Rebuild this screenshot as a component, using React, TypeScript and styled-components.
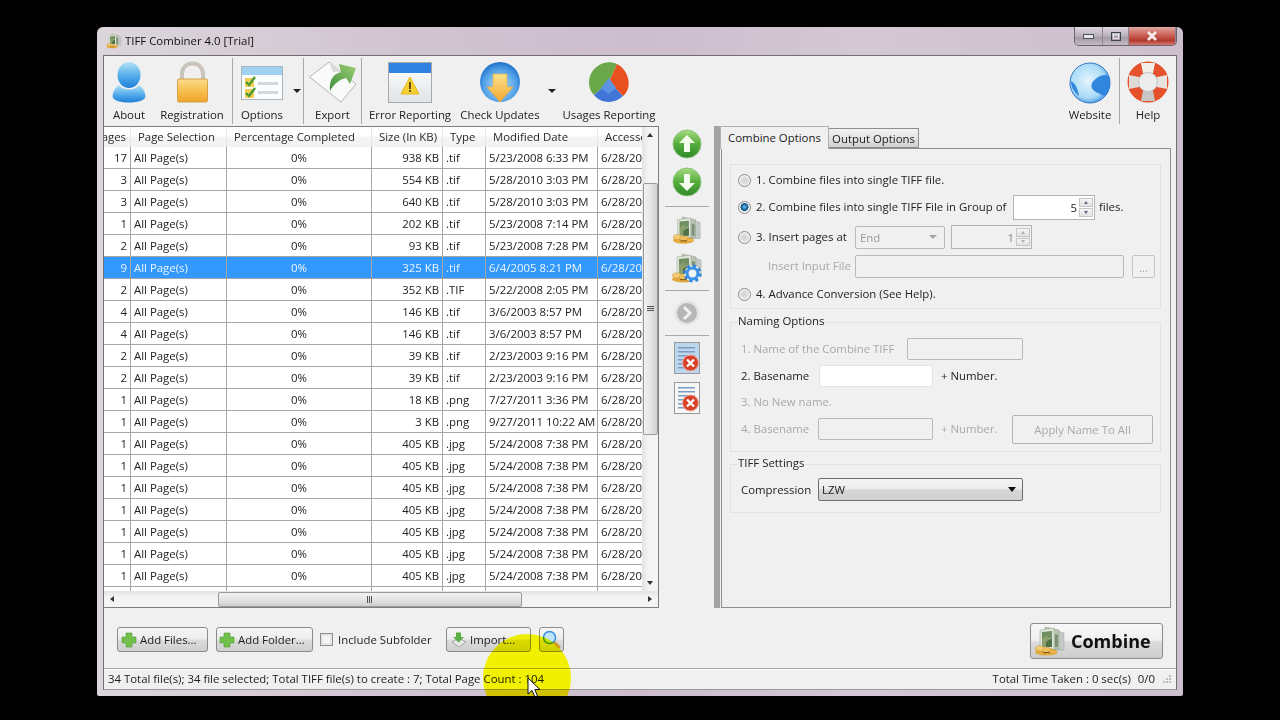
import React from "react";
import styled, { createGlobalStyle } from "styled-components";

// =============================================================================
// DATA
// =============================================================================
const COLUMNS = "27px 96px 145px 71px 43px 112px 70px";

const HEADERS = [
    { label: "Pages", align: "right" },
    { label: "Page Selection", align: "left" },
    { label: "Percentage Completed", align: "left" },
    { label: "Size (In KB)", align: "left" },
    { label: "Type", align: "left" },
    { label: "Modified Date", align: "left" },
    { label: "Accessed", align: "left" },
];

const FILES: [string, string, string, string][] = [
    ["17", "938 KB", ".tif", "5/23/2008 6:33 PM"],
    ["3", "554 KB", ".tif", "5/28/2010 3:03 PM"],
    ["3", "640 KB", ".tif", "5/28/2010 3:03 PM"],
    ["1", "202 KB", ".tif", "5/23/2008 7:14 PM"],
    ["2", "93 KB", ".tif", "5/23/2008 7:28 PM"],
    ["9", "325 KB", ".tif", "6/4/2005 8:21 PM"],
    ["2", "352 KB", ".TIF", "5/22/2008 2:05 PM"],
    ["4", "146 KB", ".tif", "3/6/2003 8:57 PM"],
    ["4", "146 KB", ".tif", "3/6/2003 8:57 PM"],
    ["2", "39 KB", ".tif", "2/23/2003 9:16 PM"],
    ["2", "39 KB", ".tif", "2/23/2003 9:16 PM"],
    ["1", "18 KB", ".png", "7/27/2011 3:36 PM"],
    ["1", "3 KB", ".png", "9/27/2011 10:22 AM"],
    ["1", "405 KB", ".jpg", "5/24/2008 7:38 PM"],
    ["1", "405 KB", ".jpg", "5/24/2008 7:38 PM"],
    ["1", "405 KB", ".jpg", "5/24/2008 7:38 PM"],
    ["1", "405 KB", ".jpg", "5/24/2008 7:38 PM"],
    ["1", "405 KB", ".jpg", "5/24/2008 7:38 PM"],
    ["1", "405 KB", ".jpg", "5/24/2008 7:38 PM"],
    ["1", "405 KB", ".jpg", "5/24/2008 7:38 PM"],
];

const SELECTED_ROW = 5;

// =============================================================================
// STYLING
// =============================================================================
const GlobalStyle = createGlobalStyle`
    html, body {
        margin: 0;
        height: 720px;
        overflow: hidden;
        background: #000;
    }
    body {
        font-family: "Open Sans", "Liberation Sans", sans-serif;
        font-size: 11.4px;
        color: #1c1c1c;
    }
    * { box-sizing: border-box; }
`;

const Window = styled.div`
    position: relative;
    overflow: hidden;
    margin: 27px 0 0 97px;
    width: 1086px;
    height: 669px;
    padding: 0 6px 6px;
    display: flex;
    flex-direction: column;
    border-radius: 6px 6px 2px 2px;
    background: linear-gradient(90deg, #dcd6dc 0%, #d2c6d2 25%, #cdbdcd 50%, #d4c8d4 70%, #cdbfce 100%);
`;

const TitleBar = styled.div`
    height: 28px;
    flex: none;
    display: flex;
    align-items: flex-start;
`;

const TitleIcon = styled.div`
    margin: 6px 0 0 3px;
    height: 16px;
`;

const TitleText = styled.span`
    margin: 6px 0 0 3px;
    line-height: 16px;
    color: #111;
`;

const CaptionGroup = styled.div`
    margin-left: auto;
    width: 103px;
    height: 19px;
    display: flex;
    border: 1px solid #6d6470;
    border-top: none;
    border-radius: 0 0 5px 5px;
    overflow: hidden;
`;

const CaptionButton = styled.div<{ $width: number; $close?: boolean }>`
    width: ${(p) => p.$width}px;
    display: flex;
    align-items: center;
    justify-content: center;
    border-right: 1px solid #8f8794;
    background: ${(p) =>
        p.$close
            ? "linear-gradient(180deg, #e0a8a0 0%, #c9584e 50%, #b33a30 75%, #d37a6e 100%)"
            : "linear-gradient(180deg, #ded8df 0%, #b9b0bb 50%, #a39aa6 60%, #c3bac5 100%)"};
`;

const Client = styled.div`
    flex: 1;
    min-height: 0;
    display: flex;
    flex-direction: column;
    border: 1px solid #6f6f6f;
    border-bottom-color: #9a9a9a;
    background: #f0f0f0;
`;

const Toolbar = styled.div`
    height: 70px;
    flex: none;
    display: flex;
    padding-top: 2px;
`;

const ToolItem = styled.div<{ $width: number }>`
    width: ${(p) => p.$width}px;
    flex: none;
    display: flex;
    flex-direction: column;
    align-items: center;
`;

const ToolIcon = styled.div`
    height: 49px;
`;

const ToolLabel = styled.span`
    height: 16px;
    line-height: 16px;
    white-space: nowrap;
    color: #222;
`;

const ToolSeparator = styled.div<{ $left?: number }>`
    width: 1px;
    height: 66px;
    flex: none;
    margin-left: ${(p) => p.$left ?? 0}px;
    background: #a9a9a9;
`;

const Dropdown = styled.div<{ $width: number }>`
    width: ${(p) => p.$width}px;
    flex: none;
    display: flex;
    justify-content: center;
    padding-top: 31px;

    &::after {
        content: "";
        width: 0;
        height: 0;
        border: 4px solid transparent;
        border-top: 4px solid #222;
        border-bottom: none;
    }
`;

const ToolSpacer = styled.div`
    flex: 1;
`;

const Main = styled.div`
    height: 482px;
    flex: none;
    display: flex;
`;

const TablePane = styled.div`
    width: 555px;
    flex: none;
    display: flex;
    flex-direction: column;
    border: 1px solid #7d7d7d;
    border-left: none;
    background: #fff;
`;

const TableArea = styled.div`
    flex: 1;
    min-height: 0;
    display: flex;
`;

const Grid = styled.div`
    flex: 1;
    min-width: 0;
    overflow: hidden;
`;

const HeaderRow = styled.div`
    height: 20px;
    display: grid;
    grid-template-columns: ${COLUMNS};
    background: linear-gradient(180deg, #ffffff 0%, #ffffff 45%, #f3f4f5 50%, #f2f2f3 100%);
`;

const HeaderCell = styled.div<{ $align: string }>`
    display: flex;
    align-items: center;
    overflow: hidden;
    white-space: nowrap;
    padding: ${(p) => (p.$align === "left" ? "0 0 0 7px" : "0 4px 0 0")};
    line-height: 20px;
    color: #2a2a2a;
    border-right: 1px solid #e4e6e8;
    justify-content: ${(p) => (p.$align === "right" ? "flex-end" : "flex-start")};
`;

const Row = styled.div<{ $selected?: boolean }>`
    height: 22px;
    display: grid;
    grid-template-columns: ${COLUMNS};
    border-bottom: 1px solid #a6a6a6;
    background: ${(p) => (p.$selected ? "#3399ff" : "#fff")};
    color: ${(p) => (p.$selected ? "#eaf4ff" : "#222")};
`;

const Cell = styled.div<{ $align?: string }>`
    overflow: hidden;
    white-space: nowrap;
    line-height: 21px;
    padding: 0 3px;
    border-right: 1px solid #a6a6a6;
    text-align: ${(p) => p.$align ?? "left"};
`;

const VScroll = styled.div`
    width: 16px;
    flex: none;
    display: flex;
    flex-direction: column;
    align-items: center;
    background: linear-gradient(90deg, #e3e3e3, #f4f4f4 40%, #f4f4f4);
`;

const HScroll = styled.div`
    height: 16px;
    flex: none;
    display: flex;
    align-items: center;
    background: linear-gradient(180deg, #e3e3e3, #f4f4f4 40%, #f4f4f4);
`;

const ScrollArrow = styled.div<{ $dir: "up" | "down" | "left" | "right" }>`
    width: 16px;
    height: 16px;
    flex: none;
    display: flex;
    align-items: center;
    justify-content: center;

    &::after {
        content: "";
        width: 0;
        height: 0;
        border: 3px solid transparent;
        ${(p) =>
            p.$dir === "up"
                ? "border-bottom: 4px solid #333; border-top: none;"
                : p.$dir === "down"
                ? "border-top: 4px solid #333; border-bottom: none;"
                : p.$dir === "left"
                ? "border-right: 4px solid #333; border-left: none;"
                : "border-left: 4px solid #333; border-right: none;"}
    }
`;

const VThumb = styled.div`
    width: 15px;
    height: 252px;
    margin-top: 40px;
    display: flex;
    align-items: center;
    justify-content: center;
    border: 1px solid #9a9a9a;
    border-radius: 2px;
    background: linear-gradient(90deg, #f2f2f2, #e4e4e4 50%, #cfcfcf);
`;

const HThumb = styled.div`
    width: 304px;
    height: 15px;
    margin-left: 98px;
    display: flex;
    align-items: center;
    justify-content: center;
    border: 1px solid #9a9a9a;
    border-radius: 2px;
    background: linear-gradient(180deg, #f2f2f2, #e4e4e4 50%, #cfcfcf);
`;

const Grip = styled.div<{ $vertical?: boolean }>`
    width: ${(p) => (p.$vertical ? 7 : 6)}px;
    height: ${(p) => (p.$vertical ? 6 : 7)}px;
    background: repeating-linear-gradient(
        ${(p) => (p.$vertical ? "180deg" : "90deg")},
        #555 0 1px,
        transparent 1px 2px
    );
`;

const ScrollFill = styled.div`
    flex: 1;
`;

const ActionStrip = styled.div`
    width: 55px;
    flex: none;
    display: flex;
    flex-direction: column;
    align-items: center;
    padding-top: 3px;
`;

const ActionIcon = styled.div<{ $height: number; $top?: number }>`
    height: ${(p) => p.$height}px;
    margin-top: ${(p) => p.$top ?? 0}px;
    display: flex;
    align-items: center;
    justify-content: center;
`;

const ActionSeparator = styled.div<{ $top: number }>`
    width: 44px;
    height: 1px;
    flex: none;
    margin-top: ${(p) => p.$top}px;
    background: #a8a8a8;
`;

const Splitter = styled.div`
    width: 6px;
    flex: none;
    background: #a3a3a3;
`;

const OptionsPane = styled.div`
    width: 451px;
    flex: none;
    display: flex;
    flex-direction: column;
`;

const Tabs = styled.div`
    height: 22px;
    flex: none;
    display: flex;
    align-items: flex-end;
`;

const Tab = styled.div<{ $active?: boolean; $width: number }>`
    width: ${(p) => p.$width}px;
    height: ${(p) => (p.$active ? 23 : 20)}px;
    margin-bottom: ${(p) => (p.$active ? -1 : 0)}px;
    padding: ${(p) => (p.$active ? "0 0 1px" : "1px 0 0")};
    position: relative;
    z-index: ${(p) => (p.$active ? 1 : 0)};
    display: flex;
    align-items: center;
    justify-content: center;
    white-space: nowrap;
    border: 1px solid ${(p) => (p.$active ? "#b0b0b0" : "#8e8e8e")};
    border-left: ${(p) => (p.$active ? "1px solid #b0b0b0" : "none")};
    border-bottom: ${(p) => (p.$active ? "none" : "1px solid #8e8e8e")};
    background: ${(p) =>
        p.$active ? "#f0f0f0" : "linear-gradient(180deg, #f2f2f2 0%, #e4e4e4 50%, #d0d0d0 100%)"};
`;

const TabBody = styled.div`
    flex: 1;
    min-height: 0;
    display: flex;
    flex-direction: column;
    margin-left: 1px;
    padding: 15px 9px 0 8px;
    border: 1px solid #8e8e8e;
    background: #f0f0f0;
`;

const PlainGroup = styled.div`
    height: 145px;
    flex: none;
    padding: 4px 0 0 7px;
    border: 1px solid #e2e2e2;
`;

const LegendGroup = styled.fieldset<{ $height: number; $top: number; $pad: number }>`
    height: ${(p) => p.$height}px;
    flex: none;
    margin: ${(p) => p.$top}px 0 0;
    padding: ${(p) => p.$pad}px 0 0 10px;
    min-width: 0;
    border: 1px solid #e2e2e2;
    border-radius: 0;

    legend {
        padding: 0 0 2px;
        margin-left: -3px;
        line-height: 14px;
        color: #222;
    }
`;

const FormRow = styled.div<{ $gap?: number; $height?: number }>`
    height: ${(p) => p.$height ?? 22}px;
    margin-top: ${(p) => p.$gap ?? 0}px;
    display: flex;
    align-items: center;
    white-space: nowrap;
`;

const FormText = styled.span<{ $width?: number; $muted?: boolean; $left?: number; $level?: boolean }>`
    width: ${(p) => (p.$width ? `${p.$width}px` : "auto")};
    flex: none;
    margin-left: ${(p) => p.$left ?? 0}px;
    padding-bottom: ${(p) => (p.$level ? 0 : 2)}px;
    color: ${(p) => (p.$muted ? "#a9a9a9" : "#222")};
`;

const Radio = styled.span<{ $checked?: boolean }>`
    width: 13px;
    height: 13px;
    flex: none;
    margin-right: 5px;
    border-radius: 50%;
    border: 1px solid #8b8b8b;
    box-shadow: inset 0 0 0 1px #f4f4f4;
    background: ${(p) =>
        p.$checked
            ? "radial-gradient(circle at 50% 45%, #7cc0ea 0, #1b6ea8 32%, #0f4c7e 46%, #e4e4e4 52%, #f2f2f2 100%)"
            : "radial-gradient(circle, #d0d0d0 0, #e0e0e0 45%, #f4f4f4 100%)"};
`;

const TextBox = styled.div<{ $width: number; $height?: number; $disabled?: boolean; $left?: number }>`
    width: ${(p) => p.$width}px;
    height: ${(p) => p.$height ?? 22}px;
    flex: none;
    margin-left: ${(p) => p.$left ?? 0}px;
    border: 1px solid ${(p) => (p.$disabled ? "#b9b9b9" : "#e4e4e4")};
    border-radius: 2px;
    background: ${(p) => (p.$disabled ? "#f0f0f0" : "#fff")};
`;

const SpinBox = styled.div<{ $width: number; $height: number; $disabled?: boolean; $left?: number }>`
    width: ${(p) => p.$width}px;
    height: ${(p) => p.$height}px;
    flex: none;
    margin-left: ${(p) => p.$left ?? 0}px;
    display: flex;
    align-items: center;
    justify-content: flex-end;
    padding-right: 1px;
    border: 1px solid #b4b4b4;
    background: ${(p) => (p.$disabled ? "#f0f0f0" : "#fff")};
    color: ${(p) => (p.$disabled ? "#8a8a8a" : "#222")};
`;

const SpinArrows = styled.div`
    width: 14px;
    height: 100%;
    margin-left: 2px;
    padding: 2px 0;
    display: flex;
    flex-direction: column;
    gap: 1px;
`;

const SpinPart = styled.div<{ $down?: boolean; $disabled?: boolean }>`
    flex: 1;
    display: flex;
    align-items: center;
    justify-content: center;
    border: 1px solid #c6c6c6;
    background: linear-gradient(180deg, #f6f6f6, #e2e2e2);

    &::after {
        content: "";
        width: 0;
        height: 0;
        border: 2.5px solid transparent;
        ${(p) =>
            p.$down
                ? `border-top: 3px solid ${p.$disabled ? "#b0b0b0" : "#5a6a80"}; border-bottom: none;`
                : `border-bottom: 3px solid ${p.$disabled ? "#b0b0b0" : "#5a6a80"}; border-top: none;`}
    }
`;

const DisabledSelect = styled.div`
    width: 90px;
    height: 23px;
    flex: none;
    margin-left: 10px;
    display: flex;
    align-items: center;
    padding: 0 4px;
    border: 1px solid #b9b9b9;
    border-radius: 2px;
    color: #9a9a9a;

    &::after {
        content: "";
        margin-left: auto;
        margin-right: 3px;
        width: 0;
        height: 0;
        border: 4px solid transparent;
        border-top: 4px solid #a5a5a5;
        border-bottom: none;
    }
`;

const EllipsisButton = styled.div`
    width: 23px;
    height: 23px;
    flex: none;
    margin-left: 8px;
    text-align: center;
    line-height: 24px;
    color: #a0a0a0;
    border: 1px solid #c4c4c4;
    border-radius: 2px;
`;

const ApplyButton = styled.div`
    width: 141px;
    height: 29px;
    flex: none;
    margin-left: 14px;
    display: flex;
    align-items: center;
    justify-content: center;
    color: #a9a9a9;
    border: 1px solid #b4b4b4;
    border-radius: 2px;
`;

const CompressionSelect = styled.div`
    width: 205px;
    height: 23px;
    flex: none;
    margin-left: 7px;
    display: flex;
    align-items: center;
    padding: 0 3px;
    border: 1px solid #6e6e6e;
    border-radius: 2px;
    background: linear-gradient(180deg, #f4f4f4 0%, #ececec 45%, #d6d6d6 55%, #cfcfcf 100%);

    &::after {
        content: "";
        margin-left: auto;
        margin-right: 3px;
        width: 0;
        height: 0;
        border: 4px solid transparent;
        border-top: 5px solid #111;
        border-bottom: none;
    }
`;

const BottomBar = styled.div`
    height: 60px;
    flex: none;
    display: flex;
    align-items: center;
    padding: 3px 13px 0;
`;

const PushButton = styled.div<{ $width: number; $left?: number; $pad?: number }>`
    width: ${(p) => p.$width}px;
    height: 25px;
    flex: none;
    margin-left: ${(p) => p.$left ?? 0}px;
    padding-left: ${(p) => p.$pad ?? 2}px;
    display: flex;
    align-items: center;
    gap: 3px;
    white-space: nowrap;
    border: 1px solid #8b8b8b;
    border-radius: 3px;
    background: linear-gradient(180deg, #f6f6f6 0%, #ececec 48%, #dcdcdc 52%, #cfcfcf 100%);
`;

const CheckBox = styled.span`
    width: 13px;
    height: 13px;
    flex: none;
    margin-left: 7px;
    border: 1px solid #8e8e8e;
    box-shadow: inset 0 0 0 2px #e6e6e6;
    background: #f6f6f6;
`;

const CheckLabel = styled.span`
    width: 108px;
    flex: none;
    margin-left: 5px;
    white-space: nowrap;
`;

const CombineButton = styled.div`
    width: 133px;
    height: 36px;
    flex: none;
    margin: 2px 0 0 auto;
    display: flex;
    align-items: center;
    gap: 5px;
    padding: 1px 0 0 3px;
    font-size: 18px;
    font-weight: 700;
    color: #111;
    border: 1px solid #8b8b8b;
    border-radius: 3px;
    background: linear-gradient(180deg, #f8f8f8 0%, #efefef 48%, #dcdcdc 52%, #cdcdcd 100%);
`;

const StatusBar = styled.div`
    flex: 1;
    display: flex;
    align-items: center;
    padding: 0 4px 1px;
    border-top: 1px solid #a5a5a5;
    box-shadow: inset 0 1px 0 #fff;
    white-space: nowrap;
`;

const StatusRight = styled.span`
    margin-left: auto;
`;

const StatusCount = styled.span`
    margin: 0 7px;
`;

const Highlight = styled.div`
    position: absolute;
    left: 386px;
    top: 607px;
    width: 88px;
    height: 88px;
    border-radius: 50%;
    background: #ffff00;
    mix-blend-mode: multiply;
    pointer-events: none;
`;

const Cursor = styled.svg`
    position: absolute;
    left: 430px;
    top: 650px;
    pointer-events: none;
`;

// =============================================================================
// ICONS
// =============================================================================
const PersonIcon = () => (
    <svg width="48" height="48" viewBox="0 0 48 48">
        <defs>
            <linearGradient id="personGrad" x1="0" y1="0" x2="0" y2="1">
                <stop offset="0" stopColor="#b4e2f8" />
                <stop offset="0.55" stopColor="#52abea" />
                <stop offset="1" stopColor="#1f80d6" />
            </linearGradient>
        </defs>
        <path d="M14 27C8 31 7 38 8 40C12 46 36 46 40 40C41 38 40 31 34 27C30 33 18 33 14 27Z" fill="url(#personGrad)" />
        <ellipse cx="24" cy="17" rx="11.5" ry="13" fill="url(#personGrad)" />
    </svg>
);

const LockIcon = () => (
    <svg width="48" height="48" viewBox="0 0 48 48">
        <defs>
            <linearGradient id="lockGrad" x1="0" y1="0" x2="0" y2="1">
                <stop offset="0" stopColor="#fbdb8e" />
                <stop offset="0.5" stopColor="#f7c04f" />
                <stop offset="1" stopColor="#f0a42a" />
            </linearGradient>
        </defs>
        <path d="M14 22V16C14 2 35 2 35 16V22" fill="none" stroke="#c9c4bb" strokeWidth="4" />
        <rect x="9.5" y="21" width="30" height="23" rx="1.5" fill="url(#lockGrad)" stroke="#d4a04a" />
    </svg>
);

const OptionsIcon = () => (
    <svg width="48" height="48" viewBox="0 0 48 48">
        <rect x="3.5" y="8.5" width="41" height="33" fill="#fbfcfd" stroke="#a9b4bd" />
        <rect x="4" y="9" width="40" height="8" fill="#9ed2f0" />
        <rect x="7" y="20" width="9" height="9" fill="#f2cf53" />
        <rect x="7" y="31" width="9" height="9" fill="#f2cf53" />
        <path d="M8 24L11 27L17 19" fill="none" stroke="#4a9a33" strokeWidth="2.4" />
        <path d="M8 35L11 38L17 30" fill="none" stroke="#4a9a33" strokeWidth="2.4" />
        <rect x="20" y="24" width="20" height="3" fill="#d6d8da" />
        <rect x="20" y="33" width="20" height="3" fill="#d6d8da" />
    </svg>
);

const ExportIcon = () => (
    <svg width="48" height="48" viewBox="0 0 48 48">
        <defs>
            <linearGradient id="exportGrad" x1="0" y1="1" x2="1" y2="0">
                <stop offset="0" stopColor="#3f8f3a" />
                <stop offset="1" stopColor="#9ccf76" />
            </linearGradient>
        </defs>
        <path d="M0.5 19L20 4L47 26L32 44Z" fill="#fafafa" stroke="#b4b4b4" />
        <path d="M20 4L24 14L33 14" fill="#dcdcdc" />
        <path d="M21 33C20 22 24 16 32 14L30 6L47 10L41 26L37 20C32 21 25 25 21 33Z" fill="url(#exportGrad)" />
    </svg>
);

const ErrorIcon = () => (
    <svg width="48" height="48" viewBox="0 0 48 48">
        <defs>
            <linearGradient id="errorBody" x1="0" y1="0" x2="0" y2="1">
                <stop offset="0" stopColor="#ffffff" />
                <stop offset="1" stopColor="#dfe3e8" />
            </linearGradient>
        </defs>
        <rect x="2.5" y="4.5" width="43" height="40" fill="url(#errorBody)" stroke="#a9a9a9" />
        <rect x="3" y="5" width="42" height="10" fill="#2f82e0" />
        <path d="M24 19L33 36H15Z" fill="#f5cf2f" stroke="#e3b81e" strokeLinejoin="round" />
        <rect x="23" y="24" width="2" height="7" fill="#6a4c10" />
        <rect x="23" y="32" width="2" height="2" fill="#6a4c10" />
    </svg>
);

const UpdatesIcon = () => (
    <svg width="48" height="48" viewBox="0 0 48 48">
        <defs>
            <radialGradient id="updGlobe" cx="0.5" cy="0.6" r="0.6">
                <stop offset="0" stopColor="#bfe4fa" />
                <stop offset="0.7" stopColor="#4f9fe6" />
                <stop offset="1" stopColor="#1e6fc8" />
            </radialGradient>
            <linearGradient id="updArrow" x1="0" y1="0" x2="0" y2="1">
                <stop offset="0" stopColor="#fbe28c" />
                <stop offset="1" stopColor="#f3a82e" />
            </linearGradient>
        </defs>
        <circle cx="24" cy="24" r="20" fill="url(#updGlobe)" />
        <path d="M17 16H31V29H37L24 44L11 29H17Z" fill="url(#updArrow)" stroke="#e7a53a" strokeWidth="0.6" />
    </svg>
);

const PieIcon = () => (
    <svg width="48" height="48" viewBox="0 0 48 48">
        <path d="M24 24L32 6C20 0 4 10 4 24C4 30 6 34 9 37Z" fill="#6aa84a" />
        <path d="M24 24L32 6C44 12 48 30 38 38Z" fill="#e9501f" />
        <path d="M24 24L38 38C30 46 16 46 9 37Z" fill="#3f76d8" />
        <path d="M24 20L31 30L24 36L16 30Z" fill="#5d95e6" />
    </svg>
);

const WebsiteIcon = () => (
    <svg width="48" height="48" viewBox="0 0 48 48">
        <defs>
            <radialGradient id="webGlobe" cx="0.45" cy="0.45" r="0.6">
                <stop offset="0" stopColor="#e4f4fd" />
                <stop offset="0.7" stopColor="#a9dbf7" />
                <stop offset="1" stopColor="#3b8fe0" />
            </radialGradient>
        </defs>
        <circle cx="24" cy="25" r="20" fill="url(#webGlobe)" stroke="#3277c4" />
        <path d="M26 25C30 19 38 15 43 18C45 25 44 32 40 37C36 39 34 35 32 35C28 33 24 31 26 25Z" fill="#2f86dc" />
        <path d="M5 23C9 25 12 31 13 38C8 34 5 29 5 23Z" fill="#2f86dc" />
    </svg>
);

const HelpIcon = () => (
    <svg width="48" height="48" viewBox="0 0 48 48">
        <circle cx="24" cy="24" r="15" fill="none" stroke="#e5512a" strokeWidth="11" />
        <path d="M17 5L31 5L29 15L19 15Z" fill="#f2eeea" />
        <path d="M17 43L31 43L29 33L19 33Z" fill="#c9c7c5" />
        <path d="M5 17L5 31L15 29L15 19Z" fill="#dedbd9" />
        <path d="M43 17L43 31L33 29L33 19Z" fill="#e6e3e1" />
        <circle cx="24" cy="24" r="9.5" fill="#ededed" stroke="#c4c4c4" />
    </svg>
);

const ArrowCircle = ({ dir }: { dir: "up" | "down" }) => {
    const id = `arrowCircle-${dir}`;
    const arrow =
        dir === "up"
            ? "M15 6L23 14H18V23H12V14H7Z"
            : "M15 24L23 16H18V7H12V16H7Z";
    return (
        <svg width="30" height="30" viewBox="0 0 30 30">
            <defs>
                <linearGradient id={id} x1="0" y1="0" x2="0" y2="1">
                    <stop offset="0" stopColor="#a6dc80" />
                    <stop offset="0.5" stopColor="#54ad3c" />
                    <stop offset="1" stopColor="#2f8a28" />
                </linearGradient>
            </defs>
            <circle cx="15" cy="15" r="14" fill={`url(#${id})`} stroke="#8cc47c" />
            <path d={arrow} fill="#f4fbef" />
        </svg>
    );
};

const NextIcon = () => (
    <svg width="26" height="26" viewBox="0 0 26 26">
        <circle cx="13" cy="13" r="12.5" fill="#e4e4e4" />
        <circle cx="13" cy="13" r="10" fill="#b6b6b6" />
        <path d="M10 7L16 13L10 19" fill="none" stroke="#efefef" strokeWidth="3" />
    </svg>
);

// page stack with a heap of coins: the app's own mark
const StackIcon = ({ size, gear }: { size: number; gear?: boolean }) => (
    <svg width={size} height={size} viewBox="0 0 32 32">
        <path d="M17 4L30 8V25H18Z" fill="#c3cac6" stroke="#9aa3a0" strokeWidth="0.5" />
        <path d="M11 2L25 5V24H11Z" fill="#b9c4b0" stroke="#8f9a8c" strokeWidth="0.5" />
        <path d="M6 5L20 3V24H6Z" fill="#dfe5d8" stroke="#97a192" strokeWidth="0.5" />
        <path d="M8 7L18 6V13L8 14Z" fill="#6f8f62" />
        <path d="M8 14L12 10L18 15V22H8Z" fill="#8a9f6c" />
        <path d="M12 17L18 13V22H12Z" fill="#4f6f47" />
        <path d="M21 9L24 10V22H21Z" fill="#7b9074" />
        <ellipse cx="12" cy="27" rx="11" ry="3.6" fill="#e3aa3e" />
        <ellipse cx="6" cy="23.5" rx="4.6" ry="2.6" fill="#f2cb72" stroke="#c6902e" strokeWidth="0.5" />
        <ellipse cx="13" cy="25" rx="4.6" ry="2.4" fill="#f0c060" stroke="#c6902e" strokeWidth="0.5" />
        <ellipse cx="19" cy="27" rx="4" ry="2.2" fill="#edb64e" stroke="#c6902e" strokeWidth="0.5" />
        <rect x="9" y="27" width="7" height="1.2" fill="#8a5e18" />
        {gear && (
            <g>
                <circle cx="21.5" cy="21.5" r="8" fill="#f0f0f0" />
                <circle cx="21.5" cy="21.5" r="7.6" fill="none" stroke="#2f83dc" strokeWidth="3" strokeDasharray="3 3" />
                <circle cx="21.5" cy="21.5" r="5.4" fill="none" stroke="#3b93e8" strokeWidth="3" />
                <circle cx="21.5" cy="21.5" r="2.6" fill="#eef6fd" />
            </g>
        )}
    </svg>
);

const DocRemoveIcon = ({ tint }: { tint: string }) => (
    <svg width="28" height="32" viewBox="0 0 28 32">
        <rect x="1.5" y="0.5" width="25" height="31" fill={tint} stroke="#9a9a9a" />
        {[5, 9, 13, 17, 21, 25].map((y) => (
            <rect key={y} x="5" y={y} width="17" height="1.5" fill="#7a9cc0" />
        ))}
        <circle cx="17.5" cy="21" r="8" fill="#d8402a" stroke="#f2b0a0" />
        <path d="M14 17.5L21 24.5M21 17.5L14 24.5" stroke="#fff" strokeWidth="2.4" />
    </svg>
);

const PlusIcon = () => (
    <svg width="16" height="16" viewBox="0 0 16 16">
        <path d="M5 1H11V5H15V11H11V15H5V11H1V5H5Z" fill="#72c04a" stroke="#4f9a34" strokeWidth="0.6" />
    </svg>
);

const ImportIcon = () => (
    <svg width="16" height="16" viewBox="0 0 16 16">
        <path d="M1 10L8 6L15 10L8 15Z" fill="#e8e8e8" stroke="#8a8a8a" strokeWidth="0.7" />
        <path d="M5 0.5H10V5H13L7.5 10.5L2 5H5Z" fill="#5cb043" />
    </svg>
);

const SearchIcon = () => (
    <svg width="19" height="19" viewBox="0 0 19 19">
        <path d="M11 11L17 17" stroke="#d49a3a" strokeWidth="3" strokeLinecap="round" />
        <circle cx="7.5" cy="7.5" r="6" fill="#bfe3fa" stroke="#3f93dc" strokeWidth="1.6" />
    </svg>
);

const ResizeGrip = () => (
    <svg width="10" height="10" viewBox="0 0 10 10">
        <rect x="7" y="1" width="2" height="2" fill="#bdbdbd" />
        <rect x="4" y="4" width="2" height="2" fill="#bdbdbd" />
        <rect x="7" y="4" width="2" height="2" fill="#bdbdbd" />
        <rect x="1" y="7" width="2" height="2" fill="#bdbdbd" />
        <rect x="4" y="7" width="2" height="2" fill="#bdbdbd" />
        <rect x="7" y="7" width="2" height="2" fill="#bdbdbd" />
    </svg>
);

// =============================================================================
// PARTS
// =============================================================================
const Spinner = ({ disabled }: { disabled?: boolean }) => (
    <SpinArrows>
        <SpinPart $disabled={disabled} />
        <SpinPart $down $disabled={disabled} />
    </SpinArrows>
);

const Tool = ({ width, label, children }: { width: number; label: string; children: React.ReactNode }) => (
    <ToolItem $width={width}>
        <ToolIcon>{children}</ToolIcon>
        <ToolLabel>{label}</ToolLabel>
    </ToolItem>
);

const FileTable = () => (
    <TablePane>
        <TableArea>
            <Grid>
                <HeaderRow>
                    {HEADERS.map((h) => (
                        <HeaderCell key={h.label} $align={h.align}>
                            {h.label}
                        </HeaderCell>
                    ))}
                </HeaderRow>
                {FILES.map(([pages, size, type, modified], i) => (
                    <Row key={i} $selected={i === SELECTED_ROW}>
                        <Cell $align="right">{pages}</Cell>
                        <Cell>All Page(s)</Cell>
                        <Cell $align="center">0%</Cell>
                        <Cell $align="right">{size}</Cell>
                        <Cell>{type}</Cell>
                        <Cell>{modified}</Cell>
                        <Cell>6/28/2011 3:00 PM</Cell>
                    </Row>
                ))}
                <Row>
                    <Cell />
                    <Cell />
                    <Cell />
                    <Cell />
                    <Cell />
                    <Cell />
                    <Cell />
                </Row>
            </Grid>
            <VScroll>
                <ScrollArrow $dir="up" />
                <VThumb>
                    <Grip $vertical />
                </VThumb>
                <ScrollFill />
                <ScrollArrow $dir="down" />
            </VScroll>
        </TableArea>
        <HScroll>
            <ScrollArrow $dir="left" />
            <HThumb>
                <Grip />
            </HThumb>
            <ScrollFill />
            <ScrollArrow $dir="right" />
        </HScroll>
    </TablePane>
);

const Actions = () => (
    <ActionStrip>
        <ActionIcon $height={30}>
            <ArrowCircle dir="up" />
        </ActionIcon>
        <ActionIcon $height={30} $top={8}>
            <ArrowCircle dir="down" />
        </ActionIcon>
        <ActionSeparator $top={9} />
        <ActionIcon $height={30} $top={8}>
            <StackIcon size={30} />
        </ActionIcon>
        <ActionIcon $height={32} $top={7}>
            <StackIcon size={32} gear />
        </ActionIcon>
        <ActionSeparator $top={6} />
        <ActionIcon $height={26} $top={9}>
            <NextIcon />
        </ActionIcon>
        <ActionSeparator $top={9} />
        <ActionIcon $height={32} $top={6}>
            <DocRemoveIcon tint="#bcd6ee" />
        </ActionIcon>
        <ActionIcon $height={32} $top={8}>
            <DocRemoveIcon tint="#f6f6f6" />
        </ActionIcon>
    </ActionStrip>
);

const Options = () => (
    <OptionsPane>
        <Tabs>
            <Tab $active $width={109}>
                Combine Options
            </Tab>
            <Tab $width={90}>Output Options</Tab>
        </Tabs>
        <TabBody>
            <PlainGroup>
                <FormRow>
                    <Radio />
                    <FormText>1. Combine files into single TIFF file.</FormText>
                </FormRow>
                <FormRow $gap={5}>
                    <Radio $checked />
                    <FormText $width={252}>2. Combine files into single TIFF File in Group of</FormText>
                    <SpinBox $width={82} $height={25} $left={5}>
                        5
                        <Spinner />
                    </SpinBox>
                    <FormText $left={4}>files.</FormText>
                </FormRow>
                <FormRow $gap={8}>
                    <Radio />
                    <FormText $width={89}>3. Insert pages at</FormText>
                    <DisabledSelect>End</DisabledSelect>
                    <SpinBox $width={81} $height={24} $left={6} $disabled>
                        1
                        <Spinner disabled />
                    </SpinBox>
                </FormRow>
                <FormRow $gap={7}>
                    <FormText $width={82} $left={30} $muted>
                        Insert Input File
                    </FormText>
                    <TextBox $width={269} $height={23} $left={5} $disabled />
                    <EllipsisButton>...</EllipsisButton>
                </FormRow>
                <FormRow $gap={6}>
                    <Radio />
                    <FormText>4. Advance Conversion (See Help).</FormText>
                </FormRow>
            </PlainGroup>
            <LegendGroup $height={138} $top={5} $pad={8}>
                <legend>Naming Options</legend>
                <FormRow>
                    <FormText $width={166} $muted>
                        1. Name of the Combine TIFF
                    </FormText>
                    <TextBox $width={116} $disabled />
                </FormRow>
                <FormRow $gap={5}>
                    <FormText $width={78}>2. Basename</FormText>
                    <TextBox $width={114} />
                    <FormText $left={8}>+ Number.</FormText>
                </FormRow>
                <FormRow $gap={4}>
                    <FormText $muted>3. No New name.</FormText>
                </FormRow>
                <FormRow $gap={5}>
                    <FormText $width={77} $muted>
                        4. Basename
                    </FormText>
                    <TextBox $width={115} $disabled />
                    <FormText $width={57} $left={8} $muted>
                        + Number.
                    </FormText>
                    <ApplyButton>Apply Name To All</ApplyButton>
                </FormRow>
            </LegendGroup>
            <LegendGroup $height={57} $top={4} $pad={6}>
                <legend>TIFF Settings</legend>
                <FormRow $height={23}>
                    <FormText $width={70} $level>
                        Compression
                    </FormText>
                    <CompressionSelect>LZW</CompressionSelect>
                </FormRow>
            </LegendGroup>
        </TabBody>
    </OptionsPane>
);

// =============================================================================
// EXPORTABLES
// =============================================================================
export default function App(): JSX.Element {
    return (
        <>
            <GlobalStyle />
            <Window>
                <TitleBar>
                    <TitleIcon>
                        <StackIcon size={16} />
                    </TitleIcon>
                    <TitleText>TIFF Combiner 4.0 [Trial]</TitleText>
                    <CaptionGroup>
                        <CaptionButton $width={28}>
                            <svg width="11" height="5" viewBox="0 0 11 5">
                                <rect x="0.5" y="0.5" width="10" height="4" fill="#e8e8ec" stroke="#4a5260" />
                            </svg>
                        </CaptionButton>
                        <CaptionButton $width={27}>
                            <svg width="10" height="9" viewBox="0 0 10 9">
                                <rect x="0.5" y="0.5" width="9" height="8" fill="none" stroke="#3a4250" />
                                <rect x="2.5" y="2.5" width="5" height="4" fill="none" stroke="#e8e8ec" />
                            </svg>
                        </CaptionButton>
                        <CaptionButton $width={47} $close>
                            <svg width="12" height="10" viewBox="0 0 12 10">
                                <path d="M2 1L10 9M10 1L2 9" stroke="#f4f0ee" strokeWidth="2.6" />
                            </svg>
                        </CaptionButton>
                    </CaptionGroup>
                </TitleBar>
                <Client>
                    <Toolbar>
                        <Tool width={50} label="About">
                            <PersonIcon />
                        </Tool>
                        <Tool width={76} label="Registration">
                            <LockIcon />
                        </Tool>
                        <ToolSeparator $left={2} />
                        <Tool width={58} label="Options">
                            <OptionsIcon />
                        </Tool>
                        <Dropdown $width={12} />
                        <ToolSeparator />
                        <Tool width={57} label="Export">
                            <ExportIcon />
                        </Tool>
                        <ToolSeparator />
                        <Tool width={96} label="Error Reporting">
                            <ErrorIcon />
                        </Tool>
                        <Tool width={84} label="Check Updates">
                            <UpdatesIcon />
                        </Tool>
                        <Dropdown $width={20} />
                        <Tool width={94} label="Usages Reporting">
                            <PieIcon />
                        </Tool>
                        <ToolSpacer />
                        <Tool width={58} label="Website">
                            <WebsiteIcon />
                        </Tool>
                        <ToolSeparator />
                        <Tool width={56} label="Help">
                            <HelpIcon />
                        </Tool>
                    </Toolbar>
                    <Main>
                        <FileTable />
                        <Actions />
                        <Splitter />
                        <Options />
                    </Main>
                    <BottomBar>
                        <PushButton $width={91} $pad={3}>
                            <PlusIcon />
                            Add Files...
                        </PushButton>
                        <PushButton $width={97} $left={8} $pad={2}>
                            <PlusIcon />
                            Add Folder...
                        </PushButton>
                        <CheckBox />
                        <CheckLabel>Include Subfolder</CheckLabel>
                        <PushButton $width={85} $pad={4}>
                            <ImportIcon />
                            Import...
                        </PushButton>
                        <PushButton $width={25} $left={8} $pad={2}>
                            <SearchIcon />
                        </PushButton>
                        <CombineButton>
                            <StackIcon size={32} />
                            Combine
                        </CombineButton>
                    </BottomBar>
                    <StatusBar>
                        34 Total file(s); 34 file selected; Total TIFF file(s) to create : 7; Total Page Count : 104
                        <StatusRight>Total Time Taken : 0 sec(s)</StatusRight>
                        <StatusCount>0/0</StatusCount>
                        <ResizeGrip />
                    </StatusBar>
                </Client>
                <Highlight />
                <Cursor width="14" height="22" viewBox="0 0 14 22">
                    <path d="M1 1V17L5 13.5L8 20L10.5 19L7.8 12.5H13Z" fill="#fff" stroke="#111" strokeWidth="1" />
                </Cursor>
            </Window>
        </>
    );
}
